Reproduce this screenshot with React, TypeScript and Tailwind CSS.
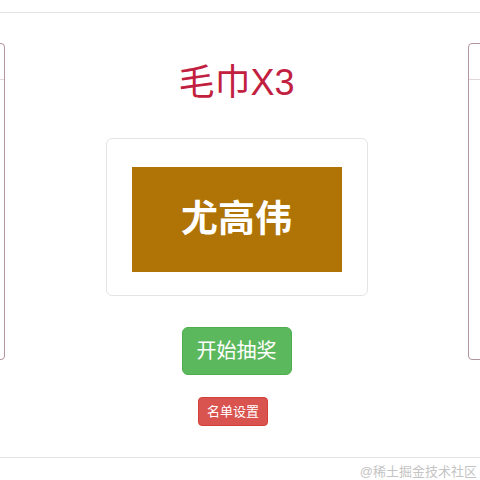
import React from 'react';

const font = { fontFamily: '"Liberation Sans", "Noto Sans CJK SC", sans-serif' };

function SidePanel({ side }: { side: 'left' | 'right' }) {
  // only the inner edge of each panel is on screen
  return (
    <div
      className={
        'w-[200px] h-[317px] shrink-0 border border-[#b0959a] rounded-[4px] ' +
        (side === 'left' ? 'ml-[-195px]' : 'mr-[-188px]')
      }
    >
      <div className="h-[36px] border-b border-[#e2d6d8]" />
    </div>
  );
}

export default function App() {
  return (
    <div className="w-[480px] h-[480px] overflow-hidden bg-white" style={font}>
      <div className="pt-[12px]">
        <div className="border-t border-[#e3e3e3]" />
      </div>

      <div className="flex items-start pt-[30px]">
        <SidePanel side="left" />

        <div className="flex-1 flex flex-col items-center">
          <h1 className="mt-[20px] text-[36px] leading-[40px] text-[#c2203f] font-normal">毛巾X3</h1>

          <div className="mt-[35px] w-[262px] h-[158px] border border-[#e4e4e4] rounded-[6px] flex justify-center pt-[28px]">
            <div className="w-[210px] h-[105px] bg-[#b07406] flex items-center justify-center">
              <span className="text-white text-[37px] font-bold leading-none">尤高伟</span>
            </div>
          </div>

          <button className="mt-[31px] w-[110px] h-[48px] rounded-[6px] bg-[#5cb85c] border border-[#4cae4c] text-white text-[20px]">
            开始抽奖
          </button>

          <button className="mt-[22px] mr-[7px] w-[70px] h-[29px] rounded-[4px] bg-[#d9534f] border border-[#d43f3a] text-white text-[13px]">
            名单设置
          </button>
        </div>

        <SidePanel side="right" />
      </div>

      <div className="mt-[31px] border-t border-[#e3e3e3]" />
      <div className="flex justify-end pr-[3px] pt-[4px]">
        <span className="text-[13px] text-[#c4c4c4]">@稀土掘金技术社区</span>
      </div>
    </div>
  );
}
